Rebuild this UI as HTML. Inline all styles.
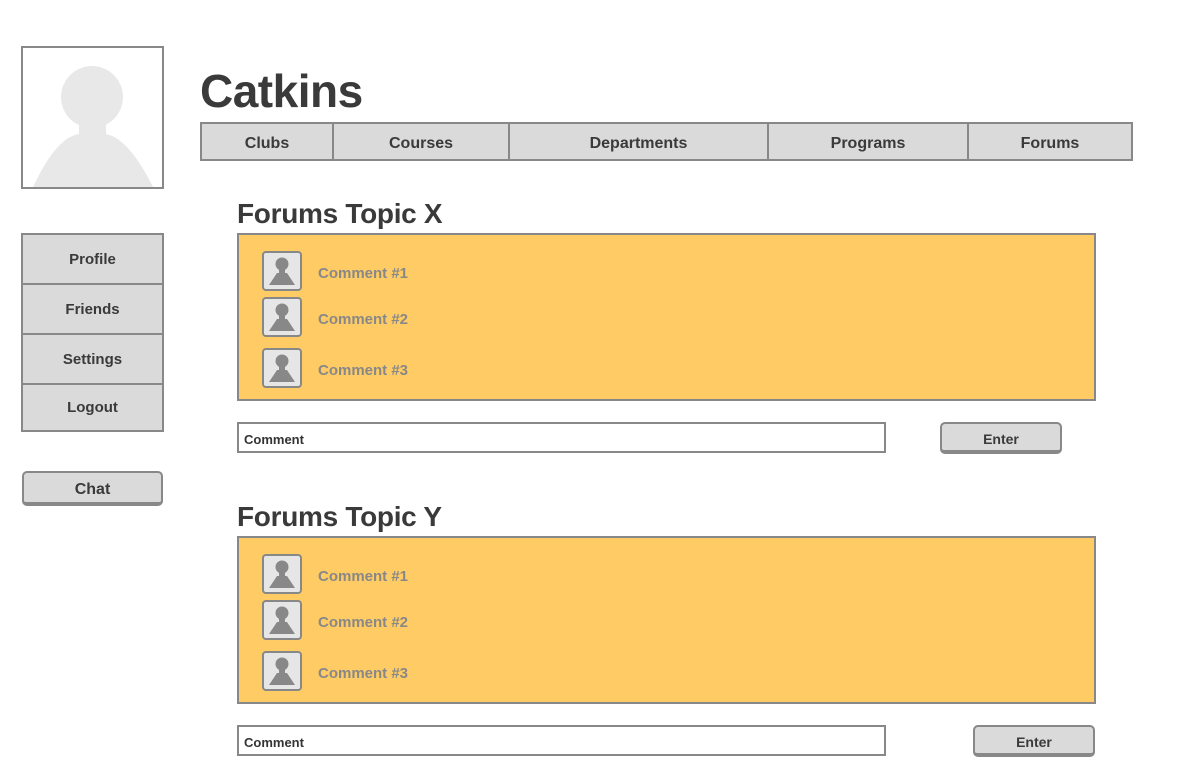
<!DOCTYPE html><html><head><style>
body{margin:0;width:1204px;height:778px;background:#fff;font-family:"Liberation Sans",sans-serif;position:relative;overflow:hidden;color:#3a3a3a}
.a{position:absolute;box-sizing:border-box}
.gb{border:2px solid #888;background:#dadada}
.c{display:flex;align-items:center;justify-content:center;font-weight:bold;box-sizing:border-box}
.nav .c{padding-top:4px}
.av{width:40px;height:40px;border:2px solid #888;border-radius:4px;background:#e6e6e6;box-sizing:border-box;position:absolute;overflow:hidden}
.ct{position:absolute;color:#888;font-weight:bold;font-size:15px}
.btn{border:2px solid #888;border-bottom-width:4px;border-radius:5px;background:#dadada}
</style></head><body>
<div class="a" style="left:21px;top:46px;width:143px;height:143px;border:2px solid #888;overflow:hidden">
<svg width="139" height="139" viewBox="0 0 139 139"><circle cx="69" cy="49" r="31" fill="#e8e8e8"/><rect x="56" y="70" width="27" height="40" fill="#e8e8e8"/><path d="M10 139 Q40 75 69 88 Q98 75 130 139Z" fill="#e8e8e8"/></svg></div>
<div class="a" style="left:200px;top:64px;font-size:46px;font-weight:bold;letter-spacing:-0.5px">Catkins</div>
<div class="a gb nav" style="left:200px;top:122px;width:933px;height:39px;display:flex">
<div class="c" style="width:132px;border-right:2px solid #888;font-size:16px">Clubs</div>
<div class="c" style="width:176px;border-right:2px solid #888;font-size:16px">Courses</div>
<div class="c" style="width:259px;border-right:2px solid #888;font-size:16px">Departments</div>
<div class="c" style="width:200px;border-right:2px solid #888;font-size:16px">Programs</div>
<div class="c" style="flex:1;font-size:16px">Forums</div></div>
<div class="a gb" style="left:21px;top:233px;width:143px;height:199px">
<div class="c" style="height:50px;border-bottom:2px solid #888;font-size:15px">Profile</div>
<div class="c" style="height:50px;border-bottom:2px solid #888;font-size:15px">Friends</div>
<div class="c" style="height:50px;border-bottom:2px solid #888;font-size:15px">Settings</div>
<div class="c" style="height:45px;font-size:15px">Logout</div></div>
<div class="a btn c" style="left:22px;top:471px;width:141px;height:35px;font-size:16px;padding-top:4px">Chat</div>

<div class="a" style="left:237px;top:198px;font-size:28px;font-weight:bold;letter-spacing:-0.3px">Forums Topic X</div>
<div class="a" style="left:237px;top:233px;width:859px;height:168px;border:2px solid #888;background:#fecb65"></div>
<div class="a" style="left:237px;top:422px;width:649px;height:31px;border:2px solid #888;font-size:13px;padding:8px 5px;font-weight:bold;color:#333">Comment</div>
<div class="a btn c" style="left:940px;top:422px;width:122px;height:32px;font-size:14px;padding-top:4px">Enter</div>

<div class="a" style="left:237px;top:501px;font-size:28px;font-weight:bold;letter-spacing:-0.3px">Forums Topic Y</div>
<div class="a" style="left:237px;top:536px;width:859px;height:168px;border:2px solid #888;background:#fecb65"></div>
<div class="a" style="left:237px;top:725px;width:649px;height:31px;border:2px solid #888;font-size:13px;padding:8px 5px;font-weight:bold;color:#333">Comment</div>
<div class="a btn c" style="left:973px;top:725px;width:122px;height:32px;font-size:14px;padding-top:4px">Enter</div>

<div id="icons"></div>
<script>
var ys=[251,297,348,554,600,651],n=[1,2,3,1,2,3],h='';
ys.forEach(function(y,i){h+='<div class="av" style="left:262px;top:'+y+'px"><svg width="36" height="36" viewBox="0 0 36 36"><circle cx="18" cy="11" r="6.5" fill="#888"/><rect x="15" y="15" width="6" height="6" fill="#888"/><path d="M5 32 L13 20 L23 20 L31 32Z" fill="#888"/></svg></div><div class="ct" style="left:318px;top:'+(y+14)+'px">Comment #'+n[i]+'</div>';});
document.getElementById('icons').innerHTML=h;
</script>
</body></html>
